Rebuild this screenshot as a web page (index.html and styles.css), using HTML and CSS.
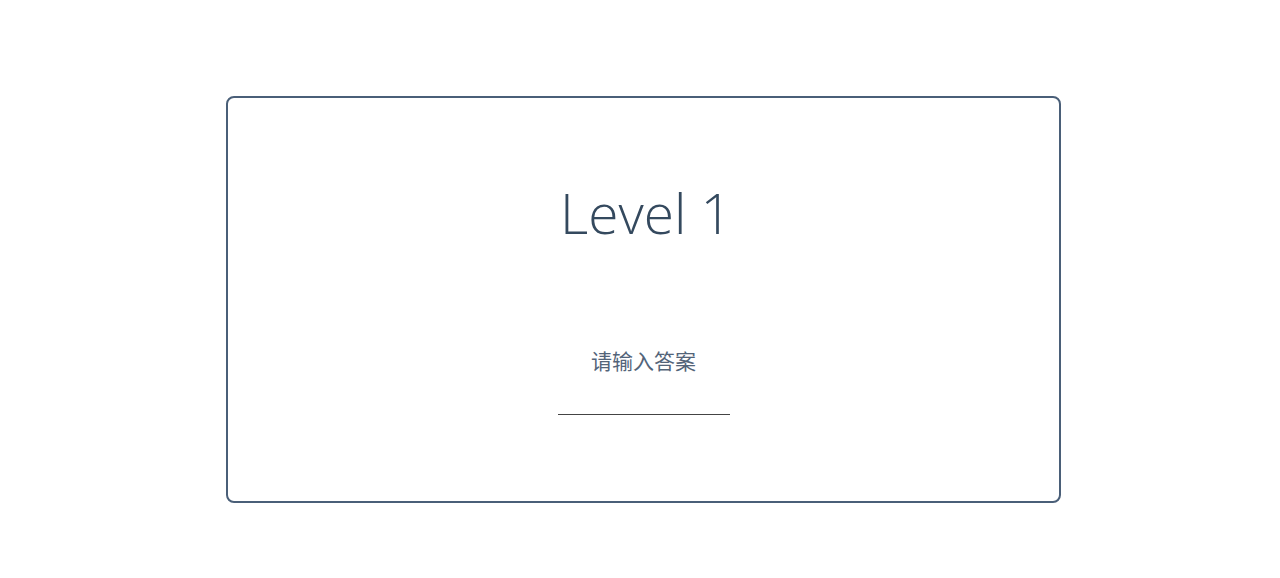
FILE: index.html
```html
<!DOCTYPE html>
<html lang="zh">
<head>
<meta charset="utf-8">
<title>Level 1</title>
<link rel="stylesheet" href="styles.css">
</head>
<body>
<div class="page">
  <div class="card">
    <h1 class="title">Level 1</h1>
    <input class="answer" type="text" placeholder="请输入答案">
  </div>
</div>
</body>
</html>
```
FILE: styles.css
```css
html, body {
  margin: 0;
  padding: 0;
  background: #fff;
}
.page {
  display: flex;
  justify-content: center;
  padding: 96px 0 0 7px;
}
.card {
  box-sizing: border-box;
  width: 835px;
  height: 407px;
  border: 2px solid #4a5f78;
  border-radius: 8px;
  display: flex;
  flex-direction: column;
  align-items: center;
}
.title {
  margin: 80px 0 0 0;
  padding-left: 5px;
  font-family: "Open Sans", sans-serif;
  font-weight: 300;
  font-size: 55px;
  line-height: 70px;
  color: #34495e;
}
.answer {
  margin-top: 98px;
  width: 172px;
  height: 69px;
  box-sizing: border-box;
  border: none;
  border-bottom: 1px solid #444;
  outline: none;
  background: transparent;
  text-align: center;
  font-family: "Noto Sans CJK SC", sans-serif;
  font-size: 21px;
  line-height: 28px;
  padding: 0 0 40px 0;
  color: #34495e;
}
.answer::placeholder {
  color: #536479;
}
```
